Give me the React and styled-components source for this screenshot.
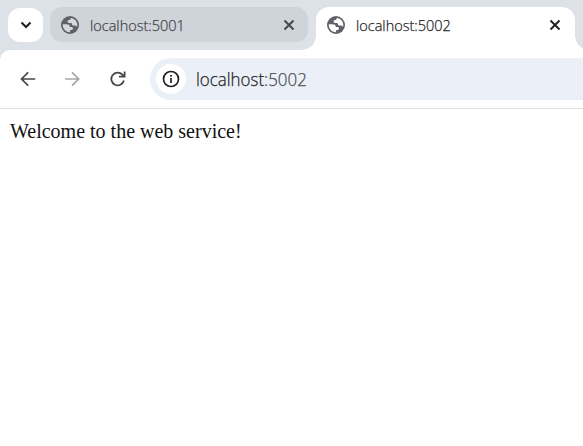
import React from "react";
import styled, { createGlobalStyle } from "styled-components";

const GlobalStyle = createGlobalStyle`
  *, *::before, *::after { box-sizing: border-box; }
  html, body { margin: 0; background: #fff; overflow: hidden; }
`;

const Browser = styled.div`
  height: 100vh;
  overflow: hidden;
  background: #fff;
  font-family: "Open Sans", "Noto Sans", sans-serif;
`;

const TabStrip = styled.div`
  display: flex;
  align-items: flex-start;
  height: 58px;
  margin-bottom: -8px;
  padding: 7px 0 0 8px;
  background: #dde1e8;
`;

const TabSearch = styled.button`
  display: grid;
  place-items: center;
  width: 35px;
  height: 34px;
  margin: 1px 7px 0 0;
  padding: 0;
  border: 0;
  border-radius: 12px;
  background: #fff;
`;

const Tab = styled.div`
  position: relative;
  display: flex;
  align-items: center;
  flex: none;
  width: ${(p) => (p.$active ? 259 : 258)}px;
  height: ${(p) => (p.$active ? 43 : 35)}px;
  margin-right: 8px;
  padding: 0 ${(p) => (p.$active ? 14 : 13)}px 0 11px;
  padding-bottom: ${(p) => (p.$active ? 7 : 0)}px;
  border-radius: ${(p) => (p.$active ? "13px 13px 0 0" : "12px")};
  background: ${(p) => (p.$active ? "#fff" : "#cfd3da")};
  color: ${(p) => (p.$active ? "#1f1f1f" : "#474747")};

  &::before, &::after {
    content: "";
    display: ${(p) => (p.$active ? "block" : "none")};
    position: absolute;
    bottom: 0;
    width: 14px;
    height: 14px;
  }
  &::before {
    right: 100%;
    background: radial-gradient(circle at 0 0, transparent 13.5px, #fff 14px);
  }
  &::after {
    left: 100%;
    background: radial-gradient(circle at 100% 0, transparent 13.5px, #fff 14px);
  }
`;

const TabTitle = styled.span`
  flex: 1;
  margin-left: 11px;
  padding-top: 2px;
  font-size: 14.5px;
  font-weight: 300;
  line-height: 20px;
`;

const FittedText = styled.span`
  display: inline-block;
  transform-origin: left;
  transform: scaleX(${(p) => p.$scale});
  -webkit-text-stroke: 0.25px currentColor;
`;

const Icon = styled.svg`
  display: block;
  flex: none;
`;

const Toolbar = styled.div`
  position: relative;
  display: flex;
  align-items: center;
  height: 59px;
  padding: 0 0 1px 17px;
  border-bottom: 1px solid #dfe1e4;
  border-top-left-radius: 10px;
  background: #fff;
`;

const NavButton = styled.button`
  display: grid;
  place-items: center;
  width: 22px;
  height: 22px;
  margin-right: 23px;
  padding: 0;
  border: 0;
  background: none;
  color: ${(p) => (p.$disabled ? "#a6a6a6" : "#474747")};
`;

const AddressBar = styled.div`
  display: flex;
  align-items: center;
  flex: 1;
  height: 42px;
  margin-left: -2px;
  padding-left: 6px;
  border-radius: 21px 0 0 21px;
  background: #ebf0f8;
`;

const SiteInfo = styled.span`
  display: grid;
  place-items: center;
  width: 30px;
  height: 30px;
  margin-right: 10px;
  border-radius: 50%;
  background: #fff;
`;

const Url = styled.span`
  font-size: 17.5px;
  font-weight: 300;
  line-height: 24px;
  color: #1f1f1f;
`;

const Port = styled.span`
  color: #4b4e53;
`;

const Page = styled.main`
  padding: 11px 10px;
  font-family: "Liberation Serif", serif;
  font-size: 20px;
  line-height: 23px;
  color: #111;
`;

const Globe = ({ land }) => (
  <Icon width="18" height="18" viewBox="0 0 18 18">
    <circle cx="9" cy="9" r="9" fill="#5f6368" />
    <path
      fill={land}
      d="M10.600 1.900C14 2.700 16.300 5.600 16.300 9C16.300 9.700 16.200 10.200 16.100 10.700C15.400 9.900 14.500 9.500 13.300 9.500C11.800 9.500 10.900 9 10.900 8C10.900 7.300 10.500 7 9.700 7H8.100C7.200 7 6.600 6.400 6.600 5.600C6.600 4.700 7.200 4.100 8.100 4.100C9 4.100 9.300 3.700 9.300 3.100C9.300 2.500 9.800 2 10.600 1.900ZM1.800 8.300H5.300C7.500 8.300 8.700 9.100 8.700 10.600V11.100H10.500C11.400 11.100 11.900 11.600 11.900 12.400C11.900 13.300 11.300 13.900 10.400 13.900H9.100V16.200C5 16.200 1.800 13 1.800 9Z"
    />
  </Icon>
);

const Close = () => (
  <Icon width="12" height="12" viewBox="0 0 12 12">
    <path d="M1.500 1.500l9 9M10.500 1.500l-9 9" fill="none" stroke="currentColor" strokeWidth="1.900" />
  </Icon>
);

const BrowserTab = ({ title, active }) => (
  <Tab $active={active}>
    <Globe land={active ? "#fff" : "#d5d9df"} />
    <TabTitle><FittedText $scale={1}>{title}</FittedText></TabTitle>
    <Close />
  </Tab>
);

export default function App() {
  return (
    <Browser>
      <GlobalStyle />
      <TabStrip>
        <TabSearch aria-label="Search tabs">
          <Icon width="12" height="8" viewBox="0 0 12 8">
            <path d="M1.500 1.500L6 6l4.500-4.500" fill="none" stroke="#1f1f1f" strokeWidth="2" />
          </Icon>
        </TabSearch>
        <BrowserTab title="localhost:5001" />
        <BrowserTab title="localhost:5002" active />
      </TabStrip>
      <Toolbar>
        <NavButton aria-label="Back">
          <Icon width="16" height="16" viewBox="0 0 16 16">
            <path d="M15.200 8H2M8.200 1.300L1.500 8l6.700 6.700" fill="none" stroke="currentColor" strokeWidth="1.700" />
          </Icon>
        </NavButton>
        <NavButton aria-label="Forward" $disabled>
          <Icon width="16" height="16" viewBox="0 0 16 16">
            <path d="M0 8H13.400M7 1.300L13.700 8L7 14.700" fill="none" stroke="currentColor" strokeWidth="1.700" />
          </Icon>
        </NavButton>
        <NavButton aria-label="Reload">
          <Icon width="16" height="16" viewBox="0 0 16 16">
            <path d="M13.900 9.600A6.400 6.400 0 1 1 12.400 3.600L14.400 5.600M9 5.700h5.600V.5" fill="none" stroke="currentColor" strokeWidth="1.800" />
          </Icon>
        </NavButton>
        <AddressBar>
          <SiteInfo>
            <Icon width="18" height="18" viewBox="0 0 18 18">
              <circle cx="9" cy="9" r="7.500" fill="none" stroke="#1f1f1f" strokeWidth="1.700" />
              <path d="M9 8v5M9 5v1.700" stroke="#1f1f1f" strokeWidth="1.700" />
            </Icon>
          </SiteInfo>
          <Url><FittedText $scale={0.968}>localhost<Port>:5002</Port></FittedText></Url>
        </AddressBar>
      </Toolbar>
      <Page>Welcome to the web service!</Page>
    </Browser>
  );
}
